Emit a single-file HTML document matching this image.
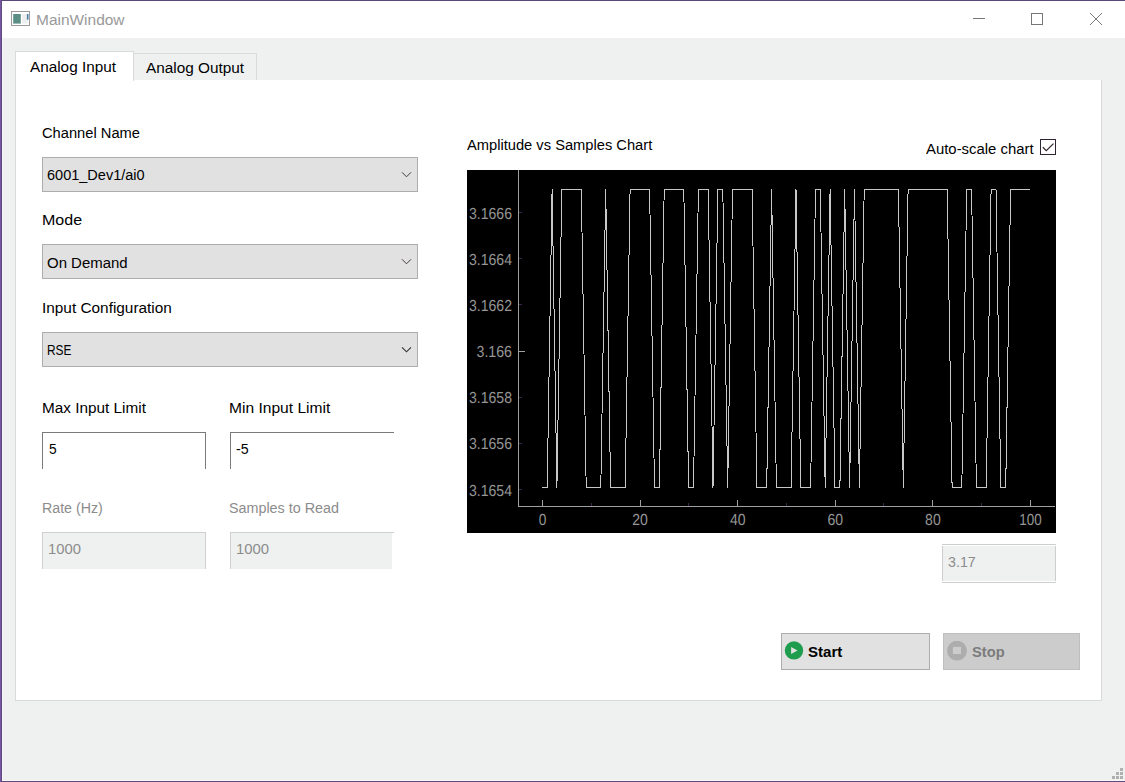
<!DOCTYPE html>
<html><head><meta charset="utf-8"><title>MainWindow</title>
<style>
html,body{margin:0;padding:0;}
body{width:1125px;height:782px;position:relative;overflow:hidden;background:#eff1f0;font-family:"Liberation Sans",sans-serif;font-size:15.3px;color:#000;}
.abs,.t{position:absolute;}
.t{white-space:nowrap;line-height:20px;height:20px;transform-origin:0 0;}
.gray2{color:#999;}
.dis{color:#8c8c8c;}
.b{font-weight:bold;}
.disb{color:#7c7c7c;}
#bl{left:0;top:0;width:2px;height:782px;background:linear-gradient(90deg,#7657a6 0,#7657a6 1px,#604a80 1px,#604a80 2px);}
#bt{left:1px;top:0;width:1124px;height:1px;background:#5c4878;}
#bb{left:1px;top:781px;width:1124px;height:1px;background:#604a80;}
#titlebar{left:2px;top:1px;width:1123px;height:37px;background:#fff;}
#pane{left:15px;top:79.7px;width:1085px;height:620.3px;background:#fff;border:1px solid #dadada;border-top:none;}
#tab1{left:15px;top:51px;width:117px;height:28.6px;background:#fff;border:1px solid #dadada;border-bottom:none;}
#tab2{left:133px;top:53px;width:123px;height:25.6px;background:#eff1f0;border:1px solid #dadada;border-left:none;border-bottom:none;}
.combo{left:42px;width:374px;height:32.4px;background:#e1e1e1;border:1px solid #adadad;}
.inp{height:36px;background:#fff;border:1px solid #7a7a7a;border-bottom:none;}
.inpd{height:36px;background:#eff1f0;border:1px solid #cfcfcf;border-bottom:none;}
.btn{top:633px;height:35px;border:1px solid #adadad;background:#e1e1e1;}
</style></head><body>
<div id="titlebar" class="abs"></div>
<div id="bl" class="abs"></div><div id="bt" class="abs"></div><div id="bb" class="abs"></div>
<div class="abs" style="left:2px;top:780px;width:1123px;height:1px;background:#f8f9f7"></div><div class="abs" style="left:2px;top:38px;width:1px;height:743px;background:#f5f7f6"></div>
<!-- title icon -->
<svg class="abs" style="left:11px;top:11px" width="20" height="16" viewBox="0 0 20 16">
<rect x="0.5" y="0.5" width="18" height="14" fill="#fff" stroke="#9a9a9a"/>
<rect x="2.2" y="3" width="7.6" height="9.6" fill="#5b8f86"/>
<rect x="11.2" y="3" width="5.6" height="9.6" fill="#eceef0"/>
<rect x="15.9" y="3" width="1.6" height="5.7" fill="#4a7ea3"/>
</svg>
<!-- window buttons -->
<svg class="abs" style="left:960px;top:1px" width="165" height="37" viewBox="0 0 165 37">
<g stroke="#777" stroke-width="1" fill="none">
<line x1="13" y1="17.5" x2="25" y2="17.5"/>
<rect x="71.5" y="12.5" width="11" height="11"/>
<path d="M130 12 L142 24 M142 12 L130 24"/>
</g></svg>
<div id="pane" class="abs"></div>
<div id="tab2" class="abs"></div>
<div id="tab1" class="abs"></div>
<div class="abs combo" style="top:157.2px"></div>
<div class="abs combo" style="top:244.4px"></div>
<div class="abs combo" style="top:332.3px"></div>
<svg class="abs" style="left:400px;top:170px" width="14" height="10" viewBox="0 0 14 10"><path d="M2 2.3 L6.5 6.8 L11 2.3" fill="none" stroke="#3a3230" stroke-width="0.95"/></svg>
<svg class="abs" style="left:400px;top:257.3px" width="14" height="10" viewBox="0 0 14 10"><path d="M2 2.3 L6.5 6.8 L11 2.3" fill="none" stroke="#3a3230" stroke-width="0.95"/></svg>
<svg class="abs" style="left:400px;top:345px" width="14" height="10" viewBox="0 0 14 10"><path d="M2 2.3 L6.5 6.8 L11 2.3" fill="none" stroke="#333" stroke-width="1.1"/></svg>
<div class="abs inp" style="left:42px;top:432px;width:162px"></div>
<div class="abs inp" style="left:230px;top:432px;width:163px;border-right:none"></div>
<div class="abs inpd" style="left:42px;top:532px;width:162px"></div>
<div class="abs inpd" style="left:230px;top:532px;width:161px;border-right:none"></div>
<div class="abs" style="left:392px;top:532px;width:2px;height:1px;background:#cfcfcf"></div>
<!-- checkbox -->
<svg class="abs" style="left:1040px;top:139px" width="16" height="16" viewBox="0 0 16 16"><rect x="0.5" y="0.5" width="15" height="15" fill="#fff" stroke="#2f2433"/><path d="M2.8 8.3 L6.3 11.7 L13.5 4.6" fill="none" stroke="#352a33" stroke-width="1.3"/></svg>
<div class="abs" style="left:467px;top:170px;width:589px;height:362.9px;background:#000"></div>
<svg id="chart" width="589" height="362" viewBox="0 0 589 362" style="position:absolute;left:467px;top:170px">
<g shape-rendering="crispEdges" stroke="#a0a0a0" stroke-width="1" fill="none">
<line x1="51.5" y1="0" x2="51.5" y2="336.5"/>
<line x1="51" y1="336.5" x2="588" y2="336.5"/>
<line x1="75.5" y1="330" x2="75.5" y2="336"/>
<line x1="173.5" y1="330" x2="173.5" y2="336"/>
<line x1="270.5" y1="330" x2="270.5" y2="336"/>
<line x1="368.5" y1="330" x2="368.5" y2="336"/>
<line x1="465.5" y1="330" x2="465.5" y2="336"/>
<line x1="563.5" y1="330" x2="563.5" y2="336"/>
<line x1="52" y1="181.5" x2="58" y2="181.5"/>
</g>
<g shape-rendering="crispEdges" stroke="#3a2346" stroke-width="1" fill="none">
<line x1="124.5" y1="333" x2="124.5" y2="336"/>
<line x1="221.5" y1="333" x2="221.5" y2="336"/>
<line x1="319.5" y1="333" x2="319.5" y2="336"/>
<line x1="416.5" y1="333" x2="416.5" y2="336"/>
<line x1="514.5" y1="333" x2="514.5" y2="336"/>
<line x1="52" y1="42.5" x2="55" y2="42.5"/>
<line x1="52" y1="88.5" x2="55" y2="88.5"/>
<line x1="52" y1="134.5" x2="55" y2="134.5"/>
<line x1="52" y1="227.5" x2="55" y2="227.5"/>
<line x1="52" y1="273.5" x2="55" y2="273.5"/>
<line x1="52" y1="319.5" x2="55" y2="319.5"/>
</g>
<polyline shape-rendering="crispEdges" points="75.3,317.5 80.2,317.5 85.1,19.5 89.9,317.5 94.8,19.5 99.7,19.5 104.6,19.5 109.4,19.5 114.3,19.5 119.2,317.5 124.1,317.5 129.0,317.5 133.8,317.5 138.7,19.5 143.6,317.5 148.5,317.5 153.3,317.5 158.2,317.5 163.1,19.5 168.0,19.5 172.9,19.5 177.7,19.5 182.6,19.5 187.5,317.5 192.4,317.5 197.2,19.5 202.1,19.5 207.0,19.5 211.9,19.5 216.8,19.5 221.6,317.5 226.5,317.5 231.4,19.5 236.3,19.5 241.2,19.5 246.0,317.5 250.9,19.5 255.8,19.5 260.7,317.5 265.5,19.5 270.4,19.5 275.3,19.5 280.2,19.5 285.1,19.5 289.9,317.5 294.8,317.5 299.7,317.5 304.6,19.5 309.4,317.5 314.3,317.5 319.2,317.5 324.1,317.5 329.0,19.5 333.8,317.5 338.7,317.5 343.6,317.5 348.5,19.5 353.3,19.5 358.2,317.5 363.1,19.5 368.0,317.5 372.9,317.5 377.7,19.5 382.6,317.5 387.5,19.5 392.4,317.5 397.2,19.5 402.1,19.5 407.0,19.5 411.9,19.5 416.8,19.5 421.6,19.5 426.5,19.5 431.4,19.5 436.3,317.5 441.1,19.5 446.0,19.5 450.9,19.5 455.8,19.5 460.7,19.5 465.5,19.5 470.4,19.5 475.3,19.5 480.2,19.5 485.1,317.5 489.9,317.5 494.8,317.5 499.7,19.5 504.6,19.5 509.4,317.5 514.3,317.5 519.2,317.5 524.1,19.5 529.0,19.5 533.8,317.5 538.7,317.5 543.6,19.5 548.5,19.5 553.3,19.5 558.2,19.5 563.1,19.5" fill="none" stroke="#c8c8c8" stroke-width="1" stroke-linejoin="miter"/>
<g text-rendering="geometricPrecision" font-family="Liberation Sans, sans-serif" font-size="15.2" fill="#969696">
<text transform="translate(45,49) scale(1,1.05)" x="0" y="0" text-anchor="end" textLength="43" lengthAdjust="spacingAndGlyphs">3.1666</text>
<text transform="translate(45,95) scale(1,1.05)" x="0" y="0" text-anchor="end" textLength="43" lengthAdjust="spacingAndGlyphs">3.1664</text>
<text transform="translate(45,141) scale(1,1.05)" x="0" y="0" text-anchor="end" textLength="43" lengthAdjust="spacingAndGlyphs">3.1662</text>
<text transform="translate(45,187) scale(1,1.05)" x="0" y="0" text-anchor="end" textLength="35.5" lengthAdjust="spacingAndGlyphs">3.166</text>
<text transform="translate(45,233) scale(1,1.05)" x="0" y="0" text-anchor="end" textLength="43" lengthAdjust="spacingAndGlyphs">3.1658</text>
<text transform="translate(45,279) scale(1,1.05)" x="0" y="0" text-anchor="end" textLength="43" lengthAdjust="spacingAndGlyphs">3.1656</text>
<text transform="translate(45,326) scale(1,1.05)" x="0" y="0" text-anchor="end" textLength="43" lengthAdjust="spacingAndGlyphs">3.1654</text>
<text transform="translate(75.5,355) scale(1,1.05)" x="0" y="0" text-anchor="middle" textLength="7.6" lengthAdjust="spacingAndGlyphs">0</text>
<text transform="translate(173.1,355) scale(1,1.05)" x="0" y="0" text-anchor="middle" textLength="15.6" lengthAdjust="spacingAndGlyphs">20</text>
<text transform="translate(270.7,355) scale(1,1.05)" x="0" y="0" text-anchor="middle" textLength="15.6" lengthAdjust="spacingAndGlyphs">40</text>
<text transform="translate(368.3,355) scale(1,1.05)" x="0" y="0" text-anchor="middle" textLength="15.6" lengthAdjust="spacingAndGlyphs">60</text>
<text transform="translate(465.9,355) scale(1,1.05)" x="0" y="0" text-anchor="middle" textLength="15.6" lengthAdjust="spacingAndGlyphs">80</text>
<text transform="translate(563.5,355) scale(1,1.05)" x="0" y="0" text-anchor="middle" textLength="22.3" lengthAdjust="spacingAndGlyphs">100</text>
</g>
</svg>
<!-- value field -->
<div class="abs" style="left:942px;top:544px;width:114px;height:1px;background:#cdcdcd"></div>
<div class="abs" style="left:942px;top:582px;width:114px;height:1px;background:#cdcdcd"></div>
<div class="abs" style="left:942px;top:545px;width:114px;height:37px;background:#fff"></div>
<div class="abs" style="left:942px;top:546px;width:112px;height:35.4px;background:#eff1f0;border-left:1px solid #cdcdcd;border-right:1px solid #cdcdcd"></div>
<!-- buttons -->
<div class="abs btn" style="left:781px;width:147px"></div>
<div class="abs btn" style="left:943px;width:135px;background:#cccccc;border-color:#bfbfbf"></div>
<svg class="abs" style="left:784px;top:641px" width="20" height="20" viewBox="0 0 20 20"><circle cx="10" cy="9.4" r="9.2" fill="#1f9d4e"/><path d="M7.1 5.9 L13.5 9.5 L7.1 13 Z" fill="#e1e1e1"/></svg>
<svg class="abs" style="left:947px;top:641px" width="20" height="20" viewBox="0 0 20 20"><circle cx="10" cy="9.65" r="9.9" fill="#adadad"/><rect x="5.9" y="5.9" width="8.1" height="7.1" fill="#cccccc"/></svg>
<!-- size grip -->
<svg class="abs" style="left:1111px;top:767px" width="13" height="13" viewBox="0 0 13 13" shape-rendering="crispEdges"><g fill="#b0b0b0"><rect x="9" y="1" width="3" height="3"/><rect x="5" y="5" width="3" height="3"/><rect x="9" y="5" width="3" height="3"/><rect x="1" y="9" width="3" height="3"/><rect x="5" y="9" width="3" height="3"/><rect x="9" y="9" width="3" height="3"/></g></svg>
<span id="t_title" class="t gray2" style="left:36.00px;top:9.75px;transform:scaleX(1.0108)">MainWindow</span>
<span id="t_tab1" class="t " style="left:30.00px;top:56.75px;transform:scaleX(1.0002)">Analog Input</span>
<span id="t_tab2" class="t " style="left:146.00px;top:57.75px;transform:scaleX(1.0031)">Analog Output</span>
<span id="t_ch" class="t " style="left:42.00px;top:122.75px;transform:scaleX(0.9600)">Channel Name</span>
<span id="t_chv" class="t " style="left:47.00px;top:164.75px;transform:scaleX(0.9490)">6001_Dev1/ai0</span>
<span id="t_mode" class="t " style="left:42.00px;top:209.75px;transform:scaleX(1.0480)">Mode</span>
<span id="t_modev" class="t " style="left:47.00px;top:252.75px;transform:scaleX(0.9778)">On Demand</span>
<span id="t_ic" class="t " style="left:42.00px;top:297.75px;transform:scaleX(1.0044)">Input Configuration</span>
<span id="t_icv" class="t " style="left:47.00px;top:339.75px;transform:scaleX(0.7765)">RSE</span>
<span id="t_max" class="t " style="left:42.00px;top:397.75px;transform:scaleX(1.0021)">Max Input Limit</span>
<span id="t_min" class="t " style="left:229.00px;top:397.75px;transform:scaleX(1.0185)">Min Input Limit</span>
<span id="t_maxv" class="t " style="left:49.00px;top:438.75px;transform:scaleX(0.9000)">5</span>
<span id="t_minv" class="t " style="left:236.00px;top:438.75px;transform:scaleX(0.9300)">-5</span>
<span id="t_rate" class="t dis" style="left:42.00px;top:497.75px;transform:scaleX(0.9292)">Rate (Hz)</span>
<span id="t_samp" class="t dis" style="left:229.00px;top:497.75px;transform:scaleX(0.9368)">Samples to Read</span>
<span id="t_ratev" class="t dis" style="left:48.00px;top:538.75px;transform:scaleX(0.9649)">1000</span>
<span id="t_sampv" class="t dis" style="left:236.00px;top:538.75px;transform:scaleX(0.9717)">1000</span>
<span id="t_amp" class="t " style="left:467.00px;top:134.75px;transform:scaleX(0.9598)">Amplitude vs Samples Chart</span>
<span id="t_auto" class="t " style="left:926.00px;top:138.75px;transform:scaleX(0.9733)">Auto-scale chart</span>
<span id="t_val" class="t dis" style="left:948.00px;top:551.75px;transform:scaleX(0.9310)">3.17</span>
<span id="t_start" class="t b" style="left:808.00px;top:641.75px;transform:scaleX(0.9844)">Start</span>
<span id="t_stop" class="t b disb" style="left:972.00px;top:641.75px;transform:scaleX(0.9603)">Stop</span>
</body></html>
